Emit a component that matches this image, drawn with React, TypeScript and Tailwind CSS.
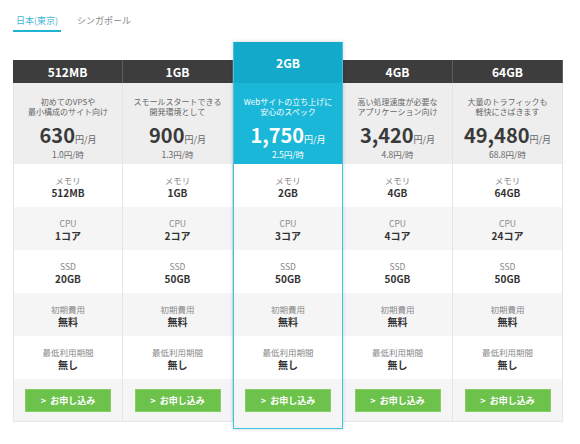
import React from 'react';
import clsx from 'clsx';

interface Plan {
  name: string;
  desc: [string, string];
  price: string;
  hour: string;
  memory: string;
  cpu: string;
  ssd: string;
  featured?: boolean;
}

const plans: Plan[] = [
  { name: '512MB', desc: ['初めてのVPSや', '最小構成のサイト向け'], price: '630', hour: '1.0', memory: '512MB', cpu: '1コア', ssd: '20GB' },
  { name: '1GB', desc: ['スモールスタートできる', '開発環境として'], price: '900', hour: '1.3', memory: '1GB', cpu: '2コア', ssd: '50GB' },
  { name: '2GB', desc: ['Webサイトの立ち上げに', '安心のスペック'], price: '1,750', hour: '2.5', memory: '2GB', cpu: '3コア', ssd: '50GB', featured: true },
  { name: '4GB', desc: ['高い処理速度が必要な', 'アプリケーション向け'], price: '3,420', hour: '4.8', memory: '4GB', cpu: '4コア', ssd: '50GB' },
  { name: '64GB', desc: ['大量のトラフィックも', '軽快にさばきます'], price: '49,480', hour: '68.8', memory: '64GB', cpu: '24コア', ssd: '50GB' },
];

const specRows = (p: Plan) => [
  { label: 'メモリ', value: p.memory },
  { label: 'CPU', value: p.cpu },
  { label: 'SSD', value: p.ssd },
  { label: '初期費用', value: '無料' },
  { label: '最低利用期間', value: '無し' },
];

const PlanColumn: React.FC<{ plan: Plan; first?: boolean }> = ({ plan, first }) => {
  const f = plan.featured;
  const cellBorder = f ? '' : clsx('border-r border-[#e6e6e6]', first && 'border-l');

  return (
    <div
      className={clsx(
        'flex w-[110px] flex-col',
        f && 'relative z-10 -mt-[18px] -mb-[7px] border border-t-0 border-[#3fc3df] shadow-[0_0_4px_rgba(0,0,0,0.18)]'
      )}
    >
      {/* Header */}
      <div
        className={clsx(
          'flex items-center justify-center text-[12px] font-bold text-white',
          f ? 'h-[41px] bg-[#12a9ca]' : 'h-[23px] border-r border-[#5e5e5e] bg-[#3d3d3d]'
        )}
      >
        {plan.name}
      </div>

      {/* Description + price */}
      <div
        className={clsx(
          'flex h-[81px] flex-col items-center pt-[14px] text-center',
          f ? 'bg-[#1ab7d8] text-white' : clsx('bg-[#eeeeee]', cellBorder)
        )}
      >
        <div className={clsx('text-[8px] leading-[10px]', f ? 'text-white' : 'text-[#666]')}>
          {plan.desc[0]}
          <br />
          {plan.desc[1]}
        </div>
        <div className={clsx('mt-[8px] flex items-baseline leading-[20px]', f ? 'text-white' : 'text-[#3a3a3a]')}>
          <span className="text-[20px] font-semibold">{plan.price}</span>
          <span className={clsx('text-[9px]', f ? 'text-white' : 'text-[#666]')}>円/月</span>
        </div>
        <div className={clsx('text-[8.5px] leading-[9px]', f ? 'text-white' : 'text-[#666]')}>
          {plan.hour}円/時
        </div>
      </div>

      {/* Spec rows */}
      {specRows(plan).map((row, i) => (
        <div
          key={row.label}
          className={clsx(
            'flex h-[43px] flex-col items-center pt-[10px] text-center',
            i % 2 === 1 ? 'bg-[#f5f5f5]' : 'bg-white',
            cellBorder
          )}
        >
          <div className="text-[8.5px] leading-[12px] text-[#888]">{row.label}</div>
          <div className="mt-[1px] text-[10px] font-bold leading-[12px] text-[#333]">{row.value}</div>
        </div>
      ))}

      {/* Button */}
      <div
        className={clsx(
          'flex flex-col items-center bg-[#f5f5f5] pt-[10px]',
          f ? 'h-[49px]' : clsx('h-[43px] border-b border-[#e6e6e6]', cellBorder)
        )}
      >
        <button className="flex h-[23px] w-[86px] items-center justify-center gap-[4px] border border-[#86cf66] bg-[#6cc24a] text-[9px] font-bold text-white">
          <span className="text-[9px] leading-none">&gt;</span>
          <span>お申し込み</span>
        </button>
      </div>
    </div>
  );
};

export default function App() {
  return (
    <div
      className="h-[444px] w-[580px] overflow-hidden bg-white"
      style={{ fontFamily: '"Noto Sans CJK JP", "Noto Sans", sans-serif' }}
    >
      {/* Region tabs */}
      <div className="flex gap-[13px] pl-[13px] pt-[14px]">
        <div className="border-b-2 border-[#1fb3d5] px-[3px] pb-[3px] text-[9px] leading-[13px] text-[#3fb5d8]">
          日本(東京)
        </div>
        <div className="px-[3px] pb-[3px] text-[9px] leading-[13px] text-[#888]">シンガポール</div>
      </div>

      {/* Plan table */}
      <div className="ml-[13px] mt-[28px] flex items-start">
        {plans.map((p, i) => (
          <PlanColumn key={p.name} plan={p} first={i === 0} />
        ))}
      </div>
    </div>
  );
}
